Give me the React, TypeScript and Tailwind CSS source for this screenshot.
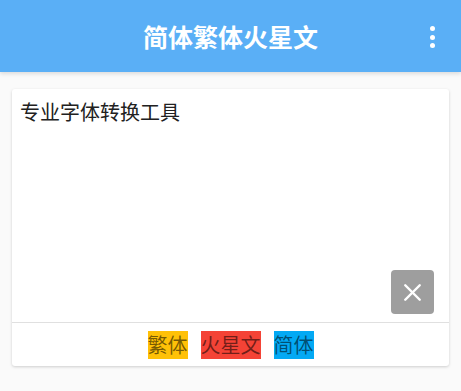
import { X } from "lucide-react";

const font = { fontFamily: '"Noto Sans CJK SC", "Noto Sans", sans-serif' };

export default function App() {
  return (
    <div className="min-h-[391px] bg-[#fafafa]" style={font}>
      <header className="relative flex h-[72px] items-center justify-center bg-[#5aaff6] shadow-[0_2px_4px_rgba(0,0,0,0.12)]">
        <h1 className="pt-[1px] text-[25px] font-bold leading-none text-white">简体繁体火星文</h1>
        <button className="absolute right-[22px] top-[26px] flex flex-col items-center gap-[3.5px] px-1">
          <span className="h-[5px] w-[5px] rounded-full bg-white" />
          <span className="h-[5px] w-[5px] rounded-full bg-white" />
          <span className="h-[5px] w-[5px] rounded-full bg-white" />
        </button>
      </header>

      <div className="mx-3 mt-[17px] rounded-[3px] bg-white shadow-[0_1px_3px_rgba(0,0,0,0.18)]">
        <div className="relative h-[233px]">
          <p className="px-2 pt-[9px] text-[20px] leading-[28px] text-[#212121]">专业字体转换工具</p>
          <button className="absolute bottom-[8px] right-[15px] flex h-[44px] w-[43px] items-center justify-center rounded-[4px] bg-[#9e9e9e]">
            <X className="h-[29px] w-[29px] text-white" strokeWidth={2} />
          </button>
        </div>
        <div className="flex h-[44px] items-center justify-center gap-[13px] border-t border-[#e0e0e0]">
          <span className="bg-[#ffc107] text-[20px] leading-[28px] text-black/55">繁体</span>
          <span className="bg-[#f44336] text-[20px] leading-[28px] text-black/55">火星文</span>
          <span className="bg-[#03a9f4] text-[20px] leading-[28px] text-black/55">简体</span>
        </div>
      </div>
    </div>
  );
}
